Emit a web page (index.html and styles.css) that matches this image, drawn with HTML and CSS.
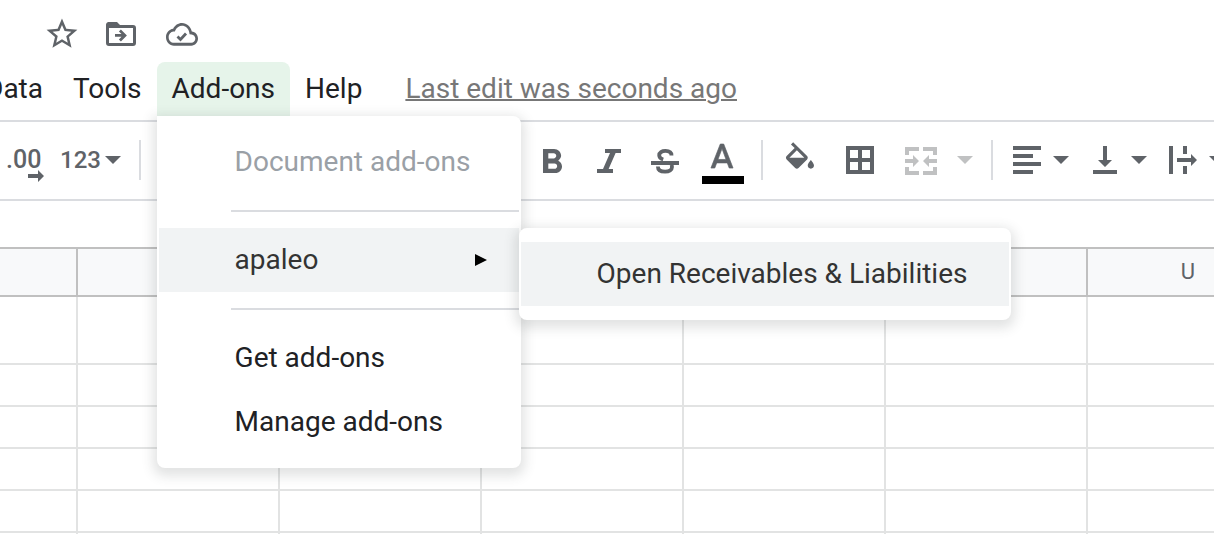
FILE: index.html
```html
<!DOCTYPE html>
<html lang="en">
<head>
<meta charset="utf-8">
<meta name="viewport" content="width=device-width, initial-scale=1">
<title>Spreadsheet</title>
<link rel="stylesheet" href="styles.css">
</head>
<body>
<header class="titlebar">
  <button class="icon-button" type="button" aria-label="Star">
    <svg width="32" height="32" viewBox="0 0 32 32"><path transform="translate(-2.500 -2.500) scale(1.54)" d="M22 9.24l-7.19-.62L12 2 9.19 8.63 2 9.24l5.46 4.73L5.82 21 12 17.27 18.18 21l-1.63-7.03L22 9.24zM12 15.4l-3.76 2.27 1-4.28-3.32-2.88 4.38-.38L12 6.1l1.71 4.04 4.38.38-3.32 2.88 1 4.28L12 15.4z"/></svg>
  </button>
  <button class="icon-button" type="button" aria-label="Move">
    <svg width="32" height="32" viewBox="0 0 32 32"><path fill-rule="evenodd" d="M2 4h9l3 3h13a3 3 0 0 1 3 3v15a3 3 0 0 1-3 3H3a3 3 0 0 1-3-3V7a3 3 0 0 1 2-3zM3 10v15h24V10z"/><path d="M9 16h6.500l-2.600-2.600 2-2 6 6-6 6-2-2 2.600-2.600H9z"/></svg>
  </button>
  <button class="icon-button" type="button" aria-label="Saved to Drive">
    <svg width="32" height="32" viewBox="0 0 32 32"><path transform="translate(0 -.7) scale(1.333 1.42)" d="M19.35 10.04C18.67 6.59 15.64 4 12 4 9.110 4 6.600 5.640 5.350 8.040 2.340 8.360 0 10.910 0 14c0 3.310 2.690 6 6 6h13c2.760 0 5-2.240 5-5 0-2.640-2.050-4.780-4.650-4.960zM19 18H6c-2.210 0-4-1.790-4-4 0-2.050 1.530-3.760 3.560-3.970l1.070-.11.5-.95C8.080 7.140 9.940 6 12 6c2.620 0 4.880 1.860 5.390 4.430l.3 1.500 1.530.11c1.560.1 2.780 1.410 2.780 2.960 0 1.650-1.350 3-3 3z"/><path d="M11.500 18.500l3 3 5.500-6" fill="none" stroke="#5f6368" stroke-width="2.800"/></svg>
  </button>
</header>

<nav class="menubar" aria-label="Main menu">
  <button class="menu-button" type="button">Data</button>
  <button class="menu-button" type="button">Tools</button>
  <div class="menu-anchor">
    <button class="menu-button menu-button-open" type="button" aria-haspopup="true" aria-expanded="true">Add-ons</button>
    <ul class="menu">
      <li><button class="menu-item" type="button" disabled>Document add-ons</button></li>
      <li class="menu-separator" role="separator"></li>
      <li class="menu-parent">
        <button class="menu-item menu-item-active" type="button" aria-haspopup="true" aria-expanded="true">apaleo
          <svg width="14" height="12" viewBox="0 0 14 12" aria-hidden="true"><path fill="#000" d="M0 0l12 6-12 6z"/></svg>
        </button>
        <ul class="menu submenu">
          <li><button class="menu-item menu-item-active" type="button">Open Receivables &amp; Liabilities</button></li>
        </ul>
      </li>
      <li class="menu-separator" role="separator"></li>
      <li><button class="menu-item" type="button">Get add-ons</button></li>
      <li><button class="menu-item" type="button">Manage add-ons</button></li>
    </ul>
  </div>
  <button class="menu-button" type="button">Help</button>
  <a class="last-edit" href="#history">Last edit was seconds ago</a>
</nav>

<div class="toolbar" role="toolbar" aria-label="Formatting">
  <div class="group group-number">
    <button class="tool" type="button" aria-label="Increase decimal places">
      <svg width="40" height="48" viewBox="0 0 40 48"><text class="decimal" x="0" y="32">.00</text><path d="M22 38h10v-4l6 6-6 6v-4H22z"/></svg>
    </button>
    <button class="tool tool-format" type="button">123<svg width="16" height="8" viewBox="0 0 16 8"><path d="M0 0h16L8 8z"/></svg></button>
  </div>
  <span class="divider"></span>
  <div class="group group-text">
    <button class="tool" type="button" aria-label="Bold">
      <svg width="42" height="48" viewBox="0 0 42 48"><path transform="translate(-3.400 6.100) scale(1.770 1.720)" d="M15.600 10.790c.97-.67 1.650-1.770 1.650-2.790 0-2.260-1.750-4-4-4H7v14h7.040c2.090 0 3.710-1.700 3.710-3.790 0-1.520-.86-2.820-2.150-3.420zM10 6.500h3c.83 0 1.500.67 1.500 1.500s-.67 1.500-1.500 1.500h-3v-3zm3.500 9H10v-3h3.500c.83 0 1.500.67 1.500 1.500s-.67 1.500-1.500 1.500z"/></svg>
    </button>
    <button class="tool" type="button" aria-label="Italic">
      <svg width="42" height="48" viewBox="0 0 42 48"><path d="M15 13h16v4h-5.400l-7 16H23v4H7v-4h6l7-16h-5z"/></svg>
    </button>
    <button class="tool" type="button" aria-label="Strikethrough">
      <svg width="42" height="48" viewBox="0 0 42 48"><path d="M5 25h28v4H5z"/><path d="M25.500 19.500c0-3-2.300-4.600-6-4.600s-6.300 1.700-6.300 4.300c0 2 1.300 3.400 4 4.300M11.900 30.500c0 3.500 2.900 5.200 7.200 5.200 4.200 0 6.900-1.800 6.900-4.700 0-1-.2-1.700-.6-2.400" fill="none" stroke="#5f6368" stroke-width="3.800"/></svg>
    </button>
    <button class="tool" type="button" aria-label="Text color">
      <svg width="42" height="48" viewBox="0 0 42 48"><path transform="translate(-.4 2.900) scale(1.700 1.714)" stroke="#5f6368" stroke-width=".4" d="M11 3L5.500 17h2.250l1.120-3h6.250l1.120 3h2.250L13 3h-2zm-1.380 9L12 5.670 14.380 12H9.620z"/><path fill="#000" d="M0 40h42v8H0z"/></svg>
    </button>
  </div>
  <span class="divider"></span>
  <div class="group group-cells">
    <button class="tool" type="button" aria-label="Fill color">
      <svg width="42" height="48" viewBox="0 0 42 48"><path transform="translate(1.300 6.200) scale(1.556)" d="M16.560 8.940L7.620 0 6.210 1.410l2.380 2.380-5.150 5.150c-.59.59-.59 1.540 0 2.120l5.500 5.500c.29.29.68.44 1.060.44s.77-.15 1.060-.44l5.500-5.500c.59-.58.59-1.530 0-2.120zM5.210 10L10 5.210 14.790 10H5.210zM19 11.500s-2 2.170-2 3.500c0 1.100.9 2 2 2s2-.9 2-2c0-1.330-2-3.500-2-3.500z"/></svg>
    </button>
    <button class="tool" type="button" aria-label="Borders">
      <svg width="42" height="48" viewBox="0 0 42 48"><path fill-rule="evenodd" d="M10 10h28v28H10zM14 14v8h8v-8zM26 14v8h8v-8zM14 26v8h8v-8zM26 26v8h8v-8z"/></svg>
    </button>
    <button class="tool tool-merge" type="button" aria-label="Merge cells" disabled>
      <svg width="32" height="48" viewBox="0 0 32 48"><path d="M0 11h14v4H4v4H0zM18 11h14v8h-4v-4H18zM0 31h4v4h10v4H0zM28 31h4v8H18v-4h10zM0 23h8v-4l6 6-6 6v-4H0zM32 23h-8v-4l-6 6 6 6v-4h8z"/></svg>
      <svg width="16" height="8" viewBox="0 0 16 8"><path d="M0 0h16L8 8z"/></svg>
    </button>
  </div>
  <span class="divider"></span>
  <div class="group group-align">
    <button class="tool tool-drop" type="button" aria-label="Horizontal align">
      <svg width="28" height="48" viewBox="0 0 28 48"><path d="M0 10h28v4H0zM0 18h20v4H0zM0 26h28v4H0zM0 34h20v4H0z"/></svg>
      <svg width="16" height="8" viewBox="0 0 16 8"><path d="M0 0h16L8 8z"/></svg>
    </button>
    <button class="tool tool-drop" type="button" aria-label="Vertical align">
      <svg width="28" height="48" viewBox="0 0 28 48"><path d="M12 10h4v14h5l-7 7-7-7h5zM2 34h24v4H2z"/></svg>
      <svg width="16" height="8" viewBox="0 0 16 8"><path d="M0 0h16L8 8z"/></svg>
    </button>
    <button class="tool tool-drop" type="button" aria-label="Text wrapping">
      <svg width="28" height="48" viewBox="0 0 28 48"><path d="M0 10h4v28H0zM14 10h4v8h-4zM14 30h4v8h-4zM8 22h14v-4l6 6-6 6v-4H8z"/></svg>
      <svg width="16" height="8" viewBox="0 0 16 8"><path d="M0 0h16L8 8z"/></svg>
    </button>
  </div>
</div>

<div class="formula-bar"></div>

<main class="sheet">
  <table class="grid">
    <colgroup><col class="col-first"><col><col><col><col><col><col></colgroup>
    <thead>
      <tr><th></th><th></th><th></th><th></th><th></th><th></th><th scope="col">U</th></tr>
    </thead>
    <tbody>
      <tr class="row-tall"><td></td><td></td><td></td><td></td><td></td><td></td><td></td></tr>
      <tr><td></td><td></td><td></td><td></td><td></td><td></td><td></td></tr>
      <tr><td></td><td></td><td></td><td></td><td></td><td></td><td></td></tr>
      <tr><td></td><td></td><td></td><td></td><td></td><td></td><td></td></tr>
      <tr><td></td><td></td><td></td><td></td><td></td><td></td><td></td></tr>
      <tr><td></td><td></td><td></td><td></td><td></td><td></td><td></td></tr>
    </tbody>
  </table>
</main>
</body>
</html>
```
FILE: styles.css
```css
* {
  box-sizing: border-box;
}

body {
  margin: 0;
  height: 100vh;
  display: flex;
  flex-direction: column;
  overflow: hidden;
  background: #fff;
  color: #202124;
  font-family: Roboto, "Liberation Sans", sans-serif;
  font-size: 28px;
  line-height: 32px;
}

button {
  margin: 0;
  padding: 0;
  border: 0;
  background: none;
  color: inherit;
  font: inherit;
  white-space: nowrap;
}

svg {
  display: block;
  flex: none;
  fill: #5f6368;
}

/* Document title actions */
.titlebar {
  display: flex;
  gap: 28px;
  padding: 18px 0 12px 46px;
}

/* Menu bar */
.menubar {
  display: flex;
  align-items: center;
  flex: none;
  height: 58px;
  margin-left: -30px;
  padding-bottom: 4px;
  white-space: nowrap;
}

.menu-button {
  height: 54px;
  padding: 0 15px;
}

.menu-anchor {
  position: relative;
  z-index: 2;
}

.menu-button-open {
  border-radius: 8px 8px 0 0;
  background: #e6f4ea;
}

.last-edit {
  margin-left: 28px;
  color: #777;
  text-decoration: underline;
  text-decoration-thickness: 2px;
}

/* Drop-down menus */
.menu {
  position: absolute;
  top: 100%;
  left: 0;
  min-width: 364px;
  margin: 0;
  padding: 14px 2px;
  list-style: none;
  border-radius: 0 8px 8px 8px;
  background: #fff;
  box-shadow: 0 4px 12px 4px rgba(60, 64, 67, 0.15);
}

.submenu {
  top: 0;
  left: 100%;
  min-width: 492px;
  border-radius: 8px;
}

.menu-parent {
  position: relative;
}

.menu-item {
  display: flex;
  align-items: center;
  justify-content: space-between;
  width: 100%;
  height: 64px;
  padding: 0 30px 0 76px;
  text-align: left;
}

.menu-item:disabled {
  color: #9aa0a6;
}

.menu-item-active {
  background: #f1f3f4;
  color: #333;
}

.menu-separator {
  height: 2px;
  margin: 16px 0 16px 72px;
  background: #dadce0;
}

/* Toolbar */
.toolbar {
  display: flex;
  align-items: center;
  flex: none;
  height: 81px;
  padding-bottom: 1px;
  overflow: hidden;
  border-top: 2px solid #dadce0;
  border-bottom: 2px solid #dadce0;
}

.group {
  display: flex;
  align-items: center;
  flex: none;
  gap: 14px;
}

.divider {
  flex: none;
  width: 2px;
  height: 40px;
  background: #dadce0;
}

.tool {
  display: flex;
  align-items: center;
  color: #5f6368;
}

.tool:disabled svg {
  fill: #c0c1c2;
}

.decimal {
  font-size: 25px;
  font-weight: 500;
}

.group-number {
  padding: 0 18px 0 6px;
}

.tool-format {
  gap: 4px;
  font-size: 24px;
  font-weight: 500;
}

.group-text {
  margin-left: 393px;
  padding-right: 17px;
}

.group-cells {
  padding: 0 18px 0 17px;
}

.tool-merge {
  gap: 20px;
  padding-left: 13px;
}

.group-align {
  gap: 22px;
  padding-left: 20px;
}

.tool-drop {
  gap: 12px;
}

.formula-bar {
  flex: none;
  height: 46px;
}

/* Cells */
.sheet {
  flex: 1;
  min-height: 0;
  overflow: hidden;
  border-top: 2px solid #c0c0c0;
}

.grid {
  width: 1288px;
  table-layout: fixed;
  border-collapse: separate;
  border-spacing: 0;
}

.grid col {
  width: 202px;
}

.grid .col-first {
  width: 78px;
}

.grid th {
  height: 48px;
  padding: 0;
  border-right: 2px solid #c0c0c0;
  border-bottom: 2px solid #c0c0c0;
  background: #f8f9fa;
  color: #5f6368;
  font-size: 22px;
  font-weight: 400;
  line-height: 24px;
}

.grid td {
  height: 42px;
  padding: 0;
  border-right: 2px solid #e2e3e3;
  border-bottom: 2px solid #e2e3e3;
}

.grid .row-tall td {
  height: 68px;
}
```
